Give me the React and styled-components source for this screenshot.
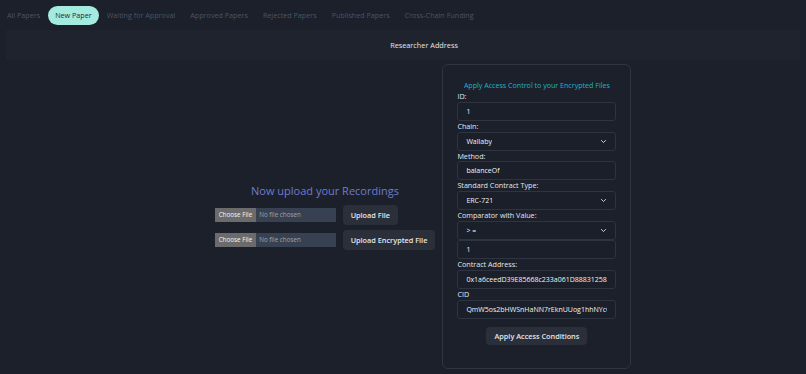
import styled, { createGlobalStyle } from 'styled-components';

const GlobalStyle = createGlobalStyle`
  body {
    margin: 0;
    background: #1b202b;
    font-family: 'Open Sans', 'Noto Sans', sans-serif;
    color: #e5e7eb;
  }
  * { box-sizing: border-box; }
`;

const tabs = [
  'All Papers',
  'New Paper',
  'Waiting for Approval',
  'Approved Papers',
  'Rejected Papers',
  'Published Papers',
  'Cross-Chain Funding',
];

const fields = [
  { label: 'ID:', value: '1' },
  { label: 'Chain:', value: 'Wallaby', select: true },
  { label: 'Method:', value: 'balanceOf' },
  { label: 'Standard Contract Type:', value: 'ERC-721', select: true },
  { label: 'Comparator with Value:', value: '> =', select: true, extra: '1' },
  { label: 'Contract Address:', value: '0x1a6ceedD39E85668c233a061D88831258a' },
  { label: 'CID', value: 'QmW5os2bHWSnHaNN7rEknUUog1hhNYcQmW' },
];

const Chevron = () => (
  <svg width="7" height="7" viewBox="0 0 10 10" fill="none">
    <path d="M2 3.5 L5 6.5 L8 3.5" stroke="#cbd5e1" strokeWidth="1.4" strokeLinecap="round" strokeLinejoin="round" />
  </svg>
);

const App = () => (
  <Page>
    <GlobalStyle />
    <Nav>
      {tabs.map((t) => (
        <Tab key={t} $active={t === 'New Paper'}>
          {t}
        </Tab>
      ))}
    </Nav>
    <Header>Researcher Address</Header>
    <Main>
      <Uploads>
        <UploadTitle>Now upload your Recordings</UploadTitle>
        <UploadRow>
          <FileInput>
            <FileButton>Choose File</FileButton>
            <FileName>No file chosen</FileName>
          </FileInput>
          <Button>Upload File</Button>
        </UploadRow>
        <UploadRow>
          <FileInput>
            <FileButton>Choose File</FileButton>
            <FileName>No file chosen</FileName>
          </FileInput>
          <Button>Upload Encrypted File</Button>
        </UploadRow>
      </Uploads>
      <Card>
        <CardTitle>Apply Access Control to your Encrypted Files</CardTitle>
        {fields.map((f) => (
          <Field key={f.label}>
            <Label>{f.label}</Label>
            <Input>
              <span>{f.value}</span>
              {f.select && <Chevron />}
            </Input>
            {f.extra && (
              <Input>
                <span>{f.extra}</span>
              </Input>
            )}
          </Field>
        ))}
        <Submit>Apply Access Conditions</Submit>
      </Card>
    </Main>
  </Page>
);

const Page = styled.div`
  min-height: 374px;
  background: #1b202b;
`;

const Nav = styled.nav`
  display: flex;
  align-items: center;
  gap: 1px;
  padding: 5px 0 0 0;
  height: 25px;
`;

const Tab = styled.div`
  font-size: 7.2px;
  line-height: 19px;
  padding: 0 7px;
  border-radius: 10px;
  color: ${(p) => (p.$active ? '#1f2937' : '#4b5563')};
  background: ${(p) => (p.$active ? '#a3eadf' : 'transparent')};
`;

const Header = styled.div`
  margin: 5px 6px 0;
  height: 30px;
  background: #1f232d;
  display: flex;
  align-items: center;
  justify-content: center;
  font-size: 7.3px;
  color: #e5e7eb;
  padding-left: 42px;
`;

const Main = styled.main`
  display: flex;
  align-items: center;
  justify-content: center;
  gap: 7px;
  padding: 4px 0 6px 40px;
`;

const Uploads = styled.div`
  display: flex;
  flex-direction: column;
  align-items: center;
  gap: 5px;
`;

const UploadTitle = styled.h2`
  margin: 0 0 2px;
  font-size: 11px;
  font-weight: 400;
  color: #6f7bcf;
`;

const UploadRow = styled.div`
  display: flex;
  align-items: center;
  gap: 7px;
  align-self: flex-start;
`;

const FileInput = styled.div`
  display: flex;
  align-items: center;
  width: 121px;
  height: 14px;
  background: #374151;
  font-size: 6.3px;
`;

const FileButton = styled.span`
  background: #6b6b6b;
  color: #f3f4f6;
  height: 100%;
  display: flex;
  align-items: center;
  padding: 0 4px;
`;

const FileName = styled.span`
  color: #9ca3af;
  padding-left: 3px;
`;

const Button = styled.button`
  font-family: inherit;
  font-size: 7.3px;
  font-weight: 600;
  color: #e5e7eb;
  background: #2a2f3a;
  border: none;
  border-radius: 4px;
  height: 20px;
  padding: 0 8px;
`;

const Card = styled.section`
  width: 189px;
  border: 1px solid #2f3540;
  border-radius: 6px;
  padding: 15px 14px 23px;
  display: flex;
  flex-direction: column;
`;

const CardTitle = styled.h3`
  margin: 0 0 1px;
  font-size: 7.1px;
  font-weight: 400;
  color: #22b3c9;
  text-align: center;
`;

const Field = styled.div`
  display: flex;
  flex-direction: column;
`;

const Label = styled.label`
  font-size: 7.2px;
  line-height: 10.8px;
  color: #e5e7eb;
`;

const Input = styled.div`
  height: 19px;
  border: 1px solid #2e3440;
  border-radius: 3px;
  background: #1a1f29;
  font-size: 7px;
  color: #f3f4f6;
  display: flex;
  align-items: center;
  justify-content: space-between;
  padding: 0 8px;
  overflow: hidden;
  white-space: nowrap;
  span {
    overflow: hidden;
  }
`;

const Submit = styled(Button)`
  align-self: center;
  margin-top: 8px;
  height: 18px;
  padding: 0 8px;
`;

export default App;
